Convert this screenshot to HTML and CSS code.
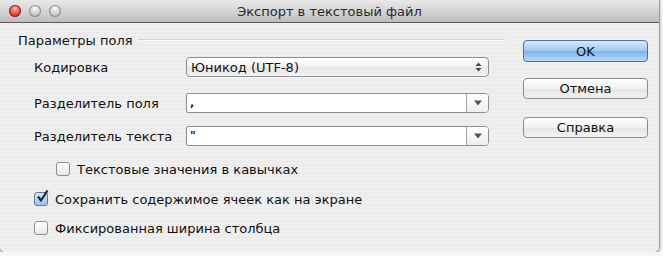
FILE: index.html
```html
<!DOCTYPE html>
<html lang="ru">
<head>
  <meta charset="UTF-8">
  <title>Экспорт в текстовый файл</title>
  <link rel="stylesheet" href="styles.css">
</head>
<body>

  <div class="window">
    <div class="titlebar">
      <div class="lights">
        <span class="light close"></span>
        <span class="light"></span>
        <span class="light"></span>
      </div>
      <div class="title">Экспорт в текстовый файл</div>
    </div>

    <div class="content">
      <div class="options">
        <div class="group-head">
          <span>Параметры поля</span>
          <span class="rule"></span>
        </div>

        <div class="field row-1">
          <label>Кодировка</label>
          <div class="popup">
            <span>Юникод (UTF-8)</span>
            <svg class="updown" width="7" height="10" viewBox="0 0 7 10">
              <path d="M3.5 0.5 L6.5 4 H0.5 Z M3.5 9.5 L6.5 6 H0.5 Z" fill="#444"/>
            </svg>
          </div>
        </div>

        <div class="field row-2">
          <label>Разделитель поля</label>
          <div class="combo">
            <span class="value">,</span>
            <span class="drop">
              <svg width="8" height="6" viewBox="0 0 8 6"><path d="M0 0.5 H8 L4 5.5 Z" fill="#555"/></svg>
            </span>
          </div>
        </div>

        <div class="field row-3">
          <label>Разделитель текста</label>
          <div class="combo">
            <span class="value">"</span>
            <span class="drop">
              <svg width="8" height="6" viewBox="0 0 8 6"><path d="M0 0.5 H8 L4 5.5 Z" fill="#555"/></svg>
            </span>
          </div>
        </div>

        <div class="check indent check-1">
          <span class="box"></span>
          <span>Текстовые значения в кавычках</span>
        </div>

        <div class="check check-2">
          <span class="box checked">
            <svg width="14" height="14" viewBox="0 0 14 14">
              <path d="M3 6.5 L6 10.5 L12.5 0.5" fill="none" stroke="#1c2a3a" stroke-width="2.2" stroke-linejoin="round"/>
            </svg>
          </span>
          <span>Сохранить содержимое ячеек как на экране</span>
        </div>

        <div class="check check-3">
          <span class="box"></span>
          <span>Фиксированная ширина столбца</span>
        </div>
      </div>

      <div class="buttons">
        <button class="btn default">OK</button>
        <button class="btn">Отмена</button>
        <button class="btn">Справка</button>
      </div>
    </div>
  </div>

</body>
</html>
```

FILE: styles.css
```css
body {
  margin: 0;
  background: #f6f6f6;
  font-family: "DejaVu Sans", sans-serif;
  font-size: 13px;
  color: #111;
}
.window {
  width: 659px;
  height: 252px;
  background: repeating-linear-gradient(#ececec 0, #ececec 2px, #efefef 2px, #efefef 4px);
  border-radius: 0 0 5px 5px;
  box-shadow: 0 0 0 1px #9a9a9a, 1px 1px 3px rgba(0,0,0,0.3);
  overflow: hidden;
}
.titlebar {
  height: 22px;
  background: linear-gradient(#e9e9e9, #d0d0d0 60%, #bcbcbc);
  border-bottom: 1px solid #5a5a5a;
  display: flex;
  align-items: center;
}
.lights {
  display: flex;
  gap: 8px;
  padding-left: 9px;
  width: 52px;
}
.light {
  width: 12px;
  height: 12px;
  border-radius: 50%;
  background: radial-gradient(circle at 50% 30%, #fafafa, #c8c8c8 60%, #a9a9a9);
  box-shadow: inset 0 0 0 1px #8d8d8d;
}
.light.close {
  background: radial-gradient(circle at 50% 30%, #ffb5a8, #e2463a 55%, #a8231c);
  box-shadow: inset 0 0 0 1px #8c2a22;
}
.title {
  flex: 1;
  text-align: center;
  font-size: 13px;
  color: #2a2a2a;
  margin-right: 61px;
}
.content {
  display: flex;
}
.options {
  width: 505px;
  padding: 9px 0 0 18px;
  box-sizing: border-box;
}
.group-head {
  display: flex;
  align-items: center;
  height: 16px;
}
.group-head .rule {
  flex: 1;
  height: 1px;
  background: #d2d2d2;
  border-bottom: 1px solid #fafafa;
  margin: 0 0 0 5px;
}
.field {
  display: flex;
  align-items: center;
  height: 20px;
}
.field label {
  width: 152px;
  padding-left: 16px;
}
.row-1 { margin-top: 9px; }
.row-2 { margin-top: 16px; }
.row-3 { margin-top: 13px; }
.popup {
  width: 303px;
  height: 20px;
  box-sizing: border-box;
  border: 1px solid #8f8f8f;
  border-radius: 4px;
  background: linear-gradient(#ffffff, #f2f2f2 50%, #e6e6e6 51%, #f4f4f4);
  display: flex;
  align-items: center;
  justify-content: space-between;
  padding: 0 6px 0 4px;
  box-shadow: 0 1px 0 rgba(255,255,255,0.7);
}
.combo {
  width: 303px;
  height: 20px;
  box-sizing: border-box;
  border: 1px solid #8f8f8f;
  border-radius: 2px 4px 4px 2px;
  background: #fff;
  display: flex;
}
.combo .value {
  flex: 1;
  padding-left: 3px;
  line-height: 18px;
  font-size: 11px;
  font-weight: bold;
}
.combo .drop {
  width: 21px;
  border-left: 1px solid #a8a8a8;
  background: linear-gradient(#ffffff, #eeeeee);
  border-radius: 0 3px 3px 0;
  display: flex;
  align-items: center;
  justify-content: center;
}
.check {
  display: flex;
  align-items: center;
  gap: 7px;
  height: 16px;
  padding-left: 16px;
}
.check.indent { padding-left: 38px; }
.check-1 { margin-top: 15px; }
.check-2 { margin-top: 14px; }
.check-3 { margin-top: 13px; }
.box {
  width: 12px;
  height: 12px;
  border: 1px solid #8e8e8e;
  border-radius: 3px;
  background: linear-gradient(#ffffff, #e8e8e8);
  position: relative;
}
.box.checked {
  background: linear-gradient(#d7e7f7, #9cc1e8);
  border-color: #5a7aa0;
}
.box svg {
  position: absolute;
  left: 0;
  top: -3px;
}
.buttons {
  display: flex;
  flex-direction: column;
  gap: 18px;
  padding: 17px 0 0 18px;
}
.btn {
  width: 125px;
  height: 21px;
  font-family: inherit;
  font-size: 13px;
  color: #111;
  border: 1px solid #8c8c8c;
  border-radius: 4px;
  background: linear-gradient(#ffffff, #f1f1f1 50%, #e4e4e4 51%, #f3f3f3);
  padding: 0;
}
.btn.default {
  height: 22px;
  margin-bottom: -2px;
  border-color: #4f6f9c;
  background: linear-gradient(#d6e9fb, #9fc8f1 50%, #7eb3ea 51%, #b8dbfa);
}
```
